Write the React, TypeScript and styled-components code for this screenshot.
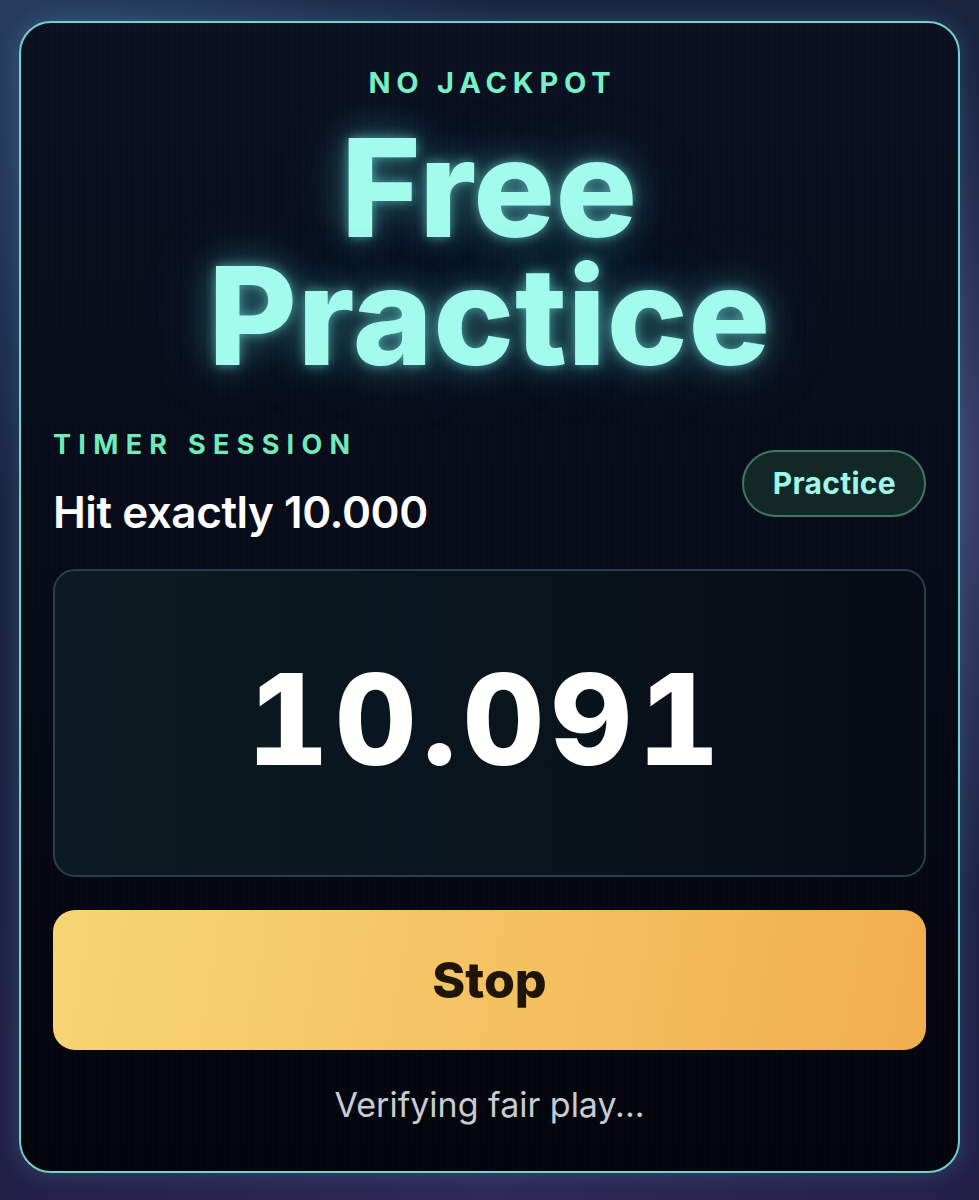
import styled, { createGlobalStyle } from "styled-components";

const GlobalStyle = createGlobalStyle`
  html, body {
    margin: 0;
    padding: 0;
  }
  body {
    background:
      radial-gradient(circle at 8% 6%, #2a4266 0%, rgba(42, 66, 102, 0) 30%),
      radial-gradient(circle at 96% 40%, #3a3f6a 0%, rgba(58, 63, 106, 0) 35%),
      radial-gradient(circle at 50% 100%, #2e2a58 0%, rgba(46, 42, 88, 0) 45%),
      linear-gradient(180deg, #1a2540 0%, #1c2442 60%, #221f44 100%);
    font-family: Inter, "Noto Sans", sans-serif;
    -webkit-font-smoothing: antialiased;
  }
`;

// page + card
const Page = styled.div`
  padding: 21px 19px 27px;
  min-height: 1200px;
  box-sizing: border-box;
`;

const Card = styled.section`
  box-sizing: border-box;
  height: 1152px;
  border: 2px solid #74cfd0;
  border-radius: 32px;
  padding: 43px 32px 0;
  background:
    repeating-linear-gradient(90deg, rgba(255, 255, 255, 0.012) 0 1px, transparent 1px 6px),
    linear-gradient(180deg, #0b1121 0%, #070b18 50%, #03050c 100%);
  box-shadow: 0 0 22px rgba(90, 190, 220, 0.22);
  display: flex;
  flex-direction: column;
`;

const Hero = styled.header`
  display: flex;
  flex-direction: column;
  align-items: center;
`;

const Eyebrow = styled.div`
  font-size: 29px;
  line-height: 34px;
  font-weight: 700;
  letter-spacing: 0.2em;
  margin-right: -0.2em;
  color: #78efc4;
`;

const Title = styled.h1`
  margin: 24px 0 0;
  display: flex;
  flex-direction: column;
  align-items: center;
  font-size: 136px;
  font-weight: 800;
  letter-spacing: 0.005em;
  color: #a2fbec;
  text-shadow:
    0 0 12px rgba(130, 245, 235, 0.55),
    0 0 34px rgba(90, 220, 220, 0.35),
    0 0 70px rgba(70, 190, 200, 0.25);
`;

const TitleLine = styled.span`
  display: block;
  height: 128px;
  line-height: 128px;
`;

// session info
const SessionRow = styled.div`
  margin-top: 48px;
  display: flex;
  align-items: center;
  justify-content: space-between;
`;

const SessionInfo = styled.div`
  display: flex;
  flex-direction: column;
  gap: 25px;
`;

const Label = styled.div`
  font-size: 27px;
  line-height: 33px;
  font-weight: 700;
  letter-spacing: 0.27em;
  color: #6feab9;
`;

const Goal = styled.div`
  font-size: 44px;
  line-height: 52px;
  font-weight: 600;
  letter-spacing: -0.01em;
  color: #ffffff;
`;

const Badge = styled.span`
  box-sizing: border-box;
  height: 67px;
  padding: 0 28px 0 29px;
  display: inline-flex;
  align-items: center;
  border-radius: 999px;
  border: 2px solid #3b7a61;
  background: #112826;
  color: #a0f6e8;
  font-size: 30px;
  font-weight: 700;
  letter-spacing: 0.01em;
`;

// timer readout
const Readout = styled.div`
  margin-top: 31px;
  height: 308px;
  box-sizing: border-box;
  border: 2px solid #2a3f4a;
  border-radius: 22px;
  background: linear-gradient(90deg, #0c1b23 0%, #09141d 55%, #060b15 100%);
  display: flex;
  align-items: center;
  justify-content: center;
`;

const Digits = styled.div`
  font-size: 126px;
  font-weight: 800;
  line-height: 1;
  letter-spacing: 0.05em;
  padding: 0 0 9px;
  margin-left: -6px;
  color: #ffffff;
  font-variant-numeric: tabular-nums;
`;

const StopButton = styled.button`
  margin-top: 33px;
  height: 140px;
  border: none;
  border-radius: 22px;
  background: linear-gradient(100deg, #f8d574 0%, #f4c060 55%, #f1ae4e 100%);
  color: #1e1507;
  font-family: inherit;
  font-size: 50px;
  font-weight: 800;
  cursor: pointer;
`;

const Status = styled.p`
  margin: 34px 0 0;
  text-align: center;
  font-size: 34px;
  line-height: 41px;
  font-weight: 400;
  color: #c9cbd3;
`;

export default function App() {
  return (
    <>
      <GlobalStyle />
      <Page>
        <Card>
          <Hero>
            <Eyebrow>NO JACKPOT</Eyebrow>
            <Title>
              <TitleLine>Free</TitleLine>
              <TitleLine>Practice</TitleLine>
            </Title>
          </Hero>
          <SessionRow>
            <SessionInfo>
              <Label>TIMER SESSION</Label>
              <Goal>Hit exactly 10.000</Goal>
            </SessionInfo>
            <Badge>Practice</Badge>
          </SessionRow>
          <Readout>
            <Digits>10.091</Digits>
          </Readout>
          <StopButton>Stop</StopButton>
          <Status>Verifying fair play...</Status>
        </Card>
      </Page>
    </>
  );
}
